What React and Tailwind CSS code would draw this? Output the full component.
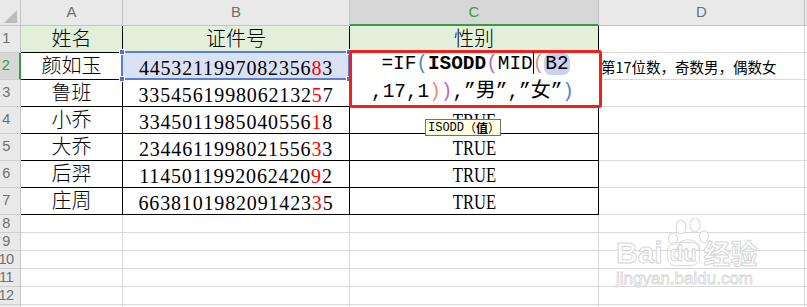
import React from 'react';

// WPS 表格截图：ISODD + MID 判断性别
const COLS = 'grid grid-cols-[21px_102px_227px_249px_206px_1fr]';
const CJK = "font-['Noto_Sans_CJK_SC',sans-serif]";
const NUM = "font-['Liberation_Serif','Noto_Sans_CJK_SC',serif]";
const MONO = "font-['Liberation_Mono','Noto_Sans_CJK_SC',monospace]";

const people = [
  { name: '颜如玉', id: '445321199708235683' },
  { name: '鲁班', id: '335456199806213257' },
  { name: '小乔', id: '334501198504055618' },
  { name: '大乔', id: '234461199802155633' },
  { name: '后羿', id: '114501199206242092' },
  { name: '庄周', id: '663810198209142335' },
];

function IdText({ id }) {
  return (
    <span className={`${NUM} text-[20px] leading-[20px] tracking-[0.83px] text-black`}>
      {id.slice(0, 16)}
      <span className="text-[#ff0000]">{id[16]}</span>
      {id[17]}
    </span>
  );
}

function RowHead({ n, active, h }) {
  return (
    <div
      className={`${h} flex items-center justify-center pr-[8px] font-['Liberation_Sans',sans-serif] text-[14.5px] tracking-[-0.5px] border-b border-[#cfcfcf] ${
        active
          ? 'bg-[#d7d7d7] text-[#3a9a48] border-r-2 border-r-[#3a9a48]'
          : 'bg-[#e9e9e9] text-[#6f6f6f] border-r border-r-[#c4c4c4]'
      }`}
    >
      {n}
    </div>
  );
}

function Formula() {
  return (
    <div className="absolute -left-px -top-[3px] w-[253px] h-[58px] z-20 bg-white border-[3px] border-[#f0201c] rounded-[3px]">
      <div className={`${MONO} -mt-[3px] text-[19.4px] leading-[28px] text-center text-black whitespace-nowrap`}>
        <div>
          =IF<span className="text-[#4f81d9]">(</span>
          <span className="font-bold">ISODD</span>
          <span className="text-[#b868c8]">(</span>MID
          <span className="inline-block w-px h-[22px] bg-black align-[-5px] -mr-px" />
          <span className="text-[#f08a6c]">(</span>
          <span className="bg-[#c8d2ef] rounded-[7px] px-[1px]">B2</span>
        </div>
        <div className="pr-[6px]">
          ,17,1<span className="text-[#f08a6c]">)</span>
          <span className="text-[#b868c8]">)</span>,”<span className="text-[20px]">男</span>”,”
          <span className="text-[20px]">女</span>”<span className="text-[#4f81d9]">)</span>
        </div>
      </div>
    </div>
  );
}

function Watermark() {
  return (
    <div className="absolute left-[612px] top-[218px] w-[160px] h-[72px] z-10 pointer-events-none select-none">
      <svg className="absolute left-[55px] top-0" width="50" height="34" viewBox="0 0 50 34" fill="white" stroke="#dcdcdc" strokeWidth="1.2">
        <ellipse cx="14" cy="9" rx="5" ry="7" />
        <ellipse cx="28" cy="7" rx="5" ry="7" />
        <ellipse cx="6" cy="21" rx="4.5" ry="6" />
        <ellipse cx="37" cy="19" rx="4.5" ry="6" />
        <path d="M10 30 C12 20 28 18 33 30 C30 34 14 34 10 30 Z" />
      </svg>
      <div className="absolute left-[4px] top-[20px] flex items-end gap-[4px] font-['Liberation_Sans',sans-serif] text-[30px] leading-[30px] font-bold text-white [-webkit-text-stroke:1px_#d6d6d6]">
        <span>Bai</span>
        <span className="text-[22px] leading-[22px] border border-[#dcdcdc] rounded-[8px] px-[2px] mb-[2px]">du</span>
        <span className={`${CJK} text-[27px] leading-[30px]`}>经验</span>
      </div>
      <div className="absolute left-[4px] top-[52px] font-['Liberation_Sans',sans-serif] text-[17px] leading-[18px] text-white [-webkit-text-stroke:0.8px_#d6d6d6]">
        jingyan.baidu.com
      </div>
    </div>
  );
}

export default function App() {
  const blk = 'border-r border-b border-black';
  const gry = 'border-r border-b border-[#d9d9d9]';

  return (
    <div className="relative w-[807px] h-[307px] overflow-hidden bg-white">
      {/* 列标题 */}
      <div className={`${COLS} h-[26px] font-['Liberation_Sans',sans-serif] text-[15px] text-[#6f6f6f]`}>
        <div className="relative bg-[#e9e9e9] border-r border-b border-[#c4c4c4]">
          <svg className="absolute left-[4px] top-[10px]" width="13" height="13" viewBox="0 0 13 13">
            <path d="M13 0 L13 13 L0 13 Z" fill="#bcbcbc" />
          </svg>
        </div>
        <div className="flex items-center justify-center bg-[#e9e9e9] border-r border-b border-[#c4c4c4]">A</div>
        <div className="flex items-center justify-center bg-[#e9e9e9] border-r border-b border-[#c4c4c4]">B</div>
        <div className="flex items-center justify-center bg-[#d7d7d7] border-r border-r-[#c4c4c4] border-b-2 border-b-[#3a9a48] text-[#3a9a48]">C</div>
        <div className="flex items-center justify-center bg-[#e9e9e9] border-r border-b border-[#c4c4c4]">D</div>
        <div className="bg-[#e9e9e9] border-b border-[#c4c4c4]" />
      </div>

      {/* 第1行 表头 */}
      <div className={`${COLS} h-[27px]`}>
        <RowHead n={1} h="h-[27px]" />
        <div className={`${blk} ${CJK} font-light bg-[#e2efda] flex items-end justify-center pb-[4px] text-[20px] leading-[20px]`}>姓名</div>
        <div className={`${blk} ${CJK} font-light bg-[#e2efda] flex items-end justify-center pb-[4px] text-[20px] leading-[20px]`}>证件号</div>
        <div className={`${blk} ${CJK} font-light bg-[#e2efda] flex items-end justify-center pb-[4px] text-[20px] leading-[20px]`}>性别</div>
        <div className={gry} />
        <div className="border-b border-[#d9d9d9]" />
      </div>

      {/* 数据行 */}
      {people.map((p, i) => {
        const r = i + 2;
        return (
          <div key={r} className={`${COLS} h-[27px]`}>
            <RowHead n={r} active={r === 2} h="h-[27px]" />
            <div className={`${blk} ${CJK} font-light flex items-end justify-center pb-[4px] text-[20px] leading-[20px] text-black`}>{p.name}</div>
            <div className={`${blk} relative flex items-end justify-center pb-[1px] ${r === 2 ? 'bg-[#dae1f3]' : ''}`}>
              <IdText id={p.id} />
              {r === 2 && (
                <div className="absolute -left-[2px] -top-[2px] w-[229px] h-[29px] border-2 border-[#5a7ed6]">
                  <div className="absolute -left-[4px] -top-[4px] w-[6px] h-[6px] bg-[#4a6fd0] border border-white" />
                  <div className="absolute -right-[4px] -top-[4px] w-[6px] h-[6px] bg-[#4a6fd0] border border-white" />
                  <div className="absolute -left-[4px] -bottom-[4px] w-[6px] h-[6px] bg-[#4a6fd0] border border-white" />
                  <div className="absolute -right-[4px] -bottom-[4px] w-[6px] h-[6px] bg-[#4a6fd0] border border-white" />
                </div>
              )}
            </div>
            <div className={`${blk} relative flex items-end justify-center pb-[1px]`}>
              {r === 2 && <Formula />}
              {r >= 4 && (
                <span className={`${NUM} inline-block text-[21px] leading-[21px] text-black scale-x-[0.79]`}>TRUE</span>
              )}
              {r === 4 && (
                <div className={`${MONO} absolute left-[75px] top-[12px] z-20 h-[17px] pl-[2px] flex items-center bg-[#ffffe1] border border-[#707070] text-[12px] leading-[14px] text-black whitespace-nowrap`}>
                  ISODD
                  <span className={`${CJK} text-[12px]`}>（</span>
                  <span className={`${CJK} font-bold text-[12px]`}>值</span>
                  <span className={`${CJK} text-[12px]`}>）</span>
                </div>
              )}
            </div>
            <div className={`${gry} ${CJK} flex items-center pl-[2px] pt-[1px] text-[14.5px] leading-[16px] text-black whitespace-nowrap`}>
              {r === 2 ? '第17位数，奇数男，偶数女' : ''}
            </div>
            <div className="border-b border-[#d9d9d9]" />
          </div>
        );
      })}

      {/* 空行 */}
      {[8, 9, 10, 11, 12, 13].map((r) => (
        <div key={r} className={`${COLS} h-[18px]`}>
          <RowHead n={r} h="h-[18px]" />
          <div className={gry} />
          <div className={gry} />
          <div className={gry} />
          <div className={gry} />
          <div className="border-b border-[#d9d9d9]" />
        </div>
      ))}

      <Watermark />
    </div>
  );
}
